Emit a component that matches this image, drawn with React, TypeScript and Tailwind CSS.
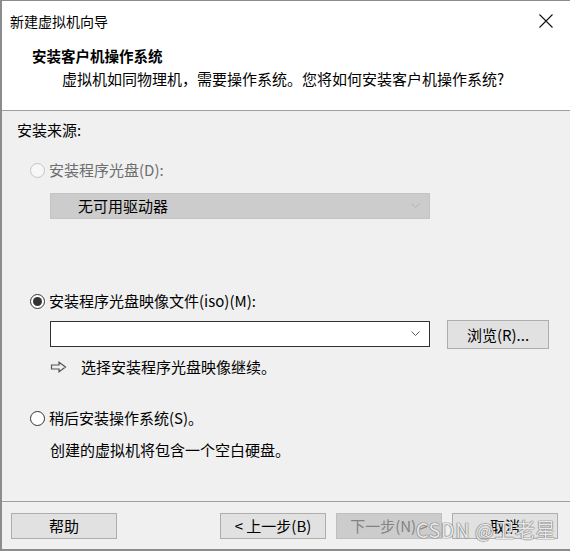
import React from "react";

const font = { fontFamily: '"Noto Sans CJK SC", "Noto Sans", sans-serif' };

function Radio({ checked, disabled }: { checked?: boolean; disabled?: boolean }) {
  return (
    <span
      className={
        "flex h-[15px] w-[15px] shrink-0 items-center justify-center rounded-full border " +
        (disabled ? "border-[#c4c4c4] bg-[#f7f7f7]" : "border-[#333333] bg-white")
      }
    >
      {checked ? <span className="h-[9px] w-[9px] rounded-full bg-[#333333]" /> : null}
    </span>
  );
}

function Chevron({ color }: { color: string }) {
  return (
    <svg width="9" height="6" viewBox="0 0 9 6" className="shrink-0">
      <path d="M0.5 0.5 L4.5 4.5 L8.5 0.5" fill="none" stroke={color} strokeWidth="1" />
    </svg>
  );
}

export default function App() {
  return (
    <div
      className="relative flex h-[551px] w-[570px] flex-col overflow-hidden border-l-2 border-t border-b-2 border-[#8c8c8c] bg-[#f0f0f0] text-[15px] leading-[20px] text-black"
      style={font}
    >
      {/* white top: title bar + header */}
      <div className="h-[110px] shrink-0 border-b border-[#a0a0a0] bg-white">
        <div className="flex items-start justify-between pl-[8px] pr-[16px] pt-[10px]">
          <span className="text-[14px] leading-[20px]">新建虚拟机向导</span>
          <svg width="16" height="16" viewBox="0 0 16 16" className="mt-[2px]">
            <path d="M1.5 1.5 L14.5 14.5 M14.5 1.5 L1.5 14.5" stroke="#111" strokeWidth="1.1" fill="none" />
          </svg>
        </div>
        <div className="mt-[15px] pl-[30px] text-[14.5px] font-bold leading-[20px]">安装客户机操作系统</div>
        <div className="mt-[3px] pl-[60px] leading-[20px]">虚拟机如同物理机，需要操作系统。您将如何安装客户机操作系统?</div>
      </div>

      {/* body */}
      <div className="flex flex-1 flex-col pl-[15px]">
        <div className="mt-[9px]">安装来源:</div>

        <div className="mt-[20px] flex items-center gap-[4px] pl-[13px] text-[#6d6d6d]">
          <Radio disabled />
          <span>安装程序光盘(D):</span>
        </div>
        <div className="ml-[33px] mt-[13px] flex h-[26px] w-[380px] items-center justify-between border border-[#c4c4c4] bg-[#cccccc] pl-[27px] pr-[9px]">
          <span>无可用驱动器</span>
          <Chevron color="#b4b4b4" />
        </div>

        <div className="mt-[72px] flex items-center gap-[4px] pl-[13px]">
          <Radio checked />
          <span>安装程序光盘映像文件(iso)(M):</span>
        </div>
        <div className="ml-[33px] mt-[9px] flex items-start">
          <div className="mt-[1px] flex h-[26px] w-[380px] items-center justify-end border border-[#333333] bg-white pr-[9px]">
            <Chevron color="#555555" />
          </div>
          <div className="ml-[17px] flex h-[29px] w-[102px] items-center justify-center border border-[#adadad] bg-[#e1e1e1]">
            浏览(R)...
          </div>
        </div>
        <div className="ml-[33px] mt-[8px] flex items-center">
          <svg width="17" height="12" viewBox="0 0 17 12" className="shrink-0">
            <path d="M1.5 4 H9 V1.2 L15.5 6 L9 10.8 V8 H1.5 Z" fill="none" stroke="#555" strokeWidth="1.2" strokeLinejoin="miter" />
          </svg>
          <span className="ml-[14px]">选择安装程序光盘映像继续。</span>
        </div>

        <div className="mt-[31px] flex items-center gap-[4px] pl-[13px]">
          <Radio />
          <span>稍后安装操作系统(S)。</span>
        </div>
        <div className="ml-[33px] mt-[12px]">创建的虚拟机将包含一个空白硬盘。</div>
      </div>

      {/* footer */}
      <div className="h-[48px] shrink-0 border-t border-[#a0a0a0]">
        <div className="flex items-start pl-[9px] pr-[12px] pt-[11px]">
          <div className="flex h-[26px] w-[106px] items-center justify-center border border-[#adadad] bg-[#e1e1e1]">帮助</div>
          <div className="flex-1" />
          <div className="flex h-[26px] w-[106px] items-center justify-center border border-[#adadad] bg-[#e1e1e1]">&lt; 上一步(B)</div>
          <div className="ml-[10px] flex h-[26px] w-[106px] items-center justify-center border border-[#bfbfbf] bg-[#cccccc] text-[#838383]">下一步(N) &gt;</div>
          <div className="ml-[10px] flex h-[26px] w-[106px] items-center justify-center border border-[#adadad] bg-[#e1e1e1]">取消</div>
        </div>
      </div>

      {/* watermark */}
      <div className="pointer-events-none absolute bottom-[8px] right-[14px] text-[20px] leading-[22px] tracking-[0.5px] text-white/85 [text-shadow:0_0_1px_#666,0_0_1px_#666,0_0_1px_#888]">
        CSDN @卫老星
      </div>
    </div>
  );
}
